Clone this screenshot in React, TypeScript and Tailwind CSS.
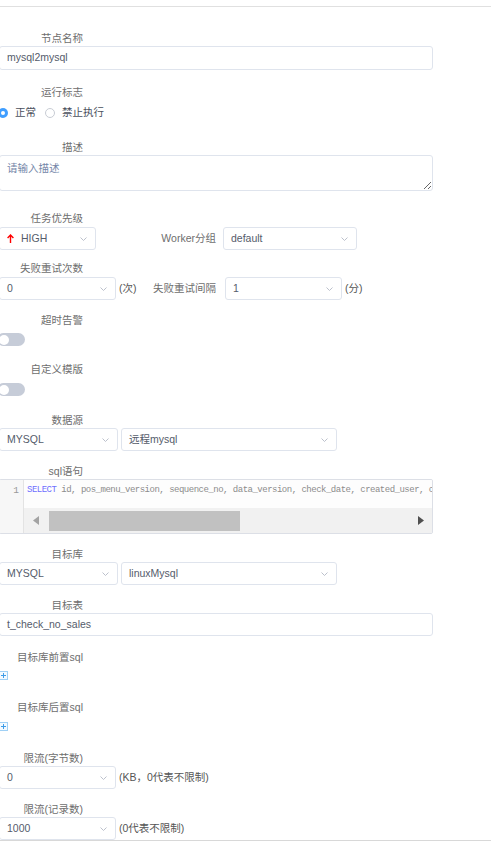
import React from "react"

const Chevron = () => (
  <svg width="7" height="4" viewBox="0 0 7 4" className="shrink-0">
    <path d="M0.5 0.5 L3.5 3.5 L6.5 0.5" fill="none" stroke="#b4bac6" strokeWidth="0.9" />
  </svg>
)

function Label({ children }: { children: React.ReactNode }) {
  return <div className="h-[16px] w-[83px] text-right leading-[16px] text-[#6e6e6e]">{children}</div>
}

function Select({ value, className }: { value: React.ReactNode; className: string }) {
  return (
    <div
      className={`flex h-[23px] shrink-0 items-center justify-between rounded-[3px] border border-[#dfe4ed] pl-[7px] pr-[8px] text-[#555c6b] ${className}`}
    >
      <span className="flex items-center">{value}</span>
      <Chevron />
    </div>
  )
}

const PlusBox = () => (
  <div className="-ml-px flex h-[9px] w-[9px] items-center justify-center border border-[#9fd0f5] bg-[#f3faff]">
    <svg width="7" height="7" viewBox="0 0 7 7">
      <path d="M3.5 1 V6 M1 3.5 H6" stroke="#3d9ce8" strokeWidth="1" />
    </svg>
  </div>
)

const Switch = () => (
  <div className="relative -ml-[3px] h-[13px] w-[28px] rounded-full bg-[#c6ccd8]">
    <div className="absolute left-[1.5px] top-[1.5px] h-[10px] w-[10px] rounded-full bg-white" />
  </div>
)

export default function App() {
  return (
    <div className="h-[845px] w-[491px] overflow-hidden bg-white font-['Liberation_Sans','Noto_Sans_CJK_SC',sans-serif] text-[10.5px]">
      <div className="mt-[6px] border-t border-[#e0e0e0]" />

      {/* 节点名称 */}
      <div className="mt-[23px]">
        <Label>节点名称</Label>
        <div className="-ml-px flex h-[24px] w-[434px] items-center rounded-[3px] border border-[#dfe4ed] pl-[7px] text-[#555c6b]">
          mysql2mysql
        </div>
      </div>

      {/* 运行标志 */}
      <div className="mt-[14px]">
        <Label>运行标志</Label>
        <div className="flex h-[26px] items-center text-[#4a4f5c]">
          <div className="-ml-[2px] flex h-[10px] w-[10px] items-center justify-center rounded-full bg-[#409eff]">
            <div className="h-[4px] w-[4px] rounded-full bg-white" />
          </div>
          <span className="ml-[7px]">正常</span>
          <div className="ml-[9px] h-[10px] w-[10px] rounded-full border border-[#c8ccd4]" />
          <span className="ml-[7px]">禁止执行</span>
        </div>
      </div>

      {/* 描述 */}
      <div className="mt-[13px]">
        <Label>描述</Label>
        <textarea
          readOnly
          placeholder="请输入描述"
          className="-ml-px block h-[36px] w-[434px] rounded-[3px] border border-[#dfe4ed] px-[7px] py-[4px] leading-[16px] text-[#555c6b] outline-none placeholder:text-[#7486a8]"
        />
      </div>

      {/* 任务优先级 */}
      <div className="mt-[19px]">
        <Label>任务优先级</Label>
        <div className="mt-px flex items-center">
          <Select
            className="-ml-px w-[97px]"
            value={
              <>
                <svg width="7" height="9" viewBox="0 0 7 9" className="mr-[7px]">
                  <path d="M3.5 9 V1.2 M0.6 4 L3.5 1 L6.4 4" fill="none" stroke="#f00" strokeWidth="1.4" />
                </svg>
                HIGH
              </>
            }
          />
          <div className="w-[120px] text-right text-[#6e6e6e]">Worker分组</div>
          <Select className="ml-[7px] w-[134px]" value="default" />
        </div>
      </div>

      {/* 失败重试次数 */}
      <div className="mt-[10px]">
        <Label>失败重试次数</Label>
        <div className="mt-px flex items-center">
          <Select className="-ml-px w-[117px]" value="0" />
          <span className="ml-[3px] w-[34px] text-[#555]">(次)</span>
          <span className="text-[#6e6e6e]">失败重试间隔</span>
          <Select className="ml-[9px] w-[117px]" value="1" />
          <span className="ml-[3px] text-[#555]">(分)</span>
        </div>
      </div>

      {/* 超时告警 */}
      <div className="mt-[12px]">
        <Label>超时告警</Label>
        <div className="mt-[5px]">
          <Switch />
        </div>
      </div>

      {/* 自定义模版 */}
      <div className="mt-[15px]">
        <Label>自定义模版</Label>
        <div className="mt-[6px]">
          <Switch />
        </div>
      </div>

      {/* 数据源 */}
      <div className="mt-[16px]">
        <Label>数据源</Label>
        <div className="flex items-center">
          <Select className="-ml-px w-[119px]" value="MYSQL" />
          <Select className="ml-[3px] w-[216px]" value="远程mysql" />
        </div>
      </div>

      {/* sql语句 */}
      <div className="mt-[12px]">
        <Label>sql语句</Label>
        <div className="-ml-px flex h-[55px] w-[434px] overflow-hidden rounded-[2px] border border-[#dcdfe6]">
          <div className="w-[24px] shrink-0 border-r border-[#e3e3e3] bg-[#f7f7f7] pr-[4px] pt-[4px] text-right font-['Liberation_Mono',monospace] text-[9.5px] leading-[13px] text-[#999]">
            1
          </div>
          <div className="flex min-w-0 flex-1 flex-col">
            <div className="h-[28px] overflow-hidden whitespace-nowrap bg-[#fdfdfd] pl-[3px] pt-[4px] font-['Liberation_Mono',monospace] text-[9px] leading-[13px] tracking-[-0.5px] text-[#8c8c8c]">
              <span className="text-[#6f6fff]">SELECT</span> id, pos_menu_version, sequence_no, data_version, check_date, created_user, c
            </div>
            <div className="flex flex-1 items-center bg-[#f1f1f1]">
              <svg width="6" height="9" viewBox="0 0 6 9" className="ml-[9px]">
                <path d="M6 0 L0 4.5 L6 9 Z" fill="#a3a3a3" />
              </svg>
              <div className="ml-[10px] h-[20px] w-[191px] bg-[#c1c1c1]" />
              <svg width="6" height="9" viewBox="0 0 6 9" className="ml-auto mr-[8px]">
                <path d="M0 0 L6 4.5 L0 9 Z" fill="#505050" />
              </svg>
            </div>
          </div>
        </div>
      </div>

      {/* 目标库 */}
      <div className="mt-[12px]">
        <Label>目标库</Label>
        <div className="flex items-center">
          <Select className="-ml-px w-[119px]" value="MYSQL" />
          <Select className="ml-[3px] w-[216px]" value="linuxMysql" />
        </div>
      </div>

      {/* 目标表 */}
      <div className="mt-[12px]">
        <Label>目标表</Label>
        <div className="-ml-px flex h-[23px] w-[434px] items-center rounded-[3px] border border-[#dfe4ed] pl-[7px] text-[#555c6b]">
          t_check_no_sales
        </div>
      </div>

      {/* 目标库前置sql */}
      <div className="mt-[13px]">
        <Label>目标库前置sql</Label>
        <div className="mt-[6px]">
          <PlusBox />
        </div>
      </div>

      {/* 目标库后置sql */}
      <div className="mt-[19px]">
        <Label>目标库后置sql</Label>
        <div className="mt-[7px]">
          <PlusBox />
        </div>
      </div>

      {/* 限流(字节数) */}
      <div className="mt-[19px]">
        <Label>限流(字节数)</Label>
        <div className="flex items-center">
          <Select className="-ml-px w-[117px]" value="0" />
          <span className="ml-[3px] text-[#555]">(KB，0代表不限制)</span>
        </div>
      </div>

      {/* 限流(记录数) */}
      <div className="mt-[12px]">
        <Label>限流(记录数)</Label>
        <div className="flex items-center">
          <Select className="-ml-px w-[117px]" value="1000" />
          <span className="ml-[3px] text-[#555]">(0代表不限制)</span>
        </div>
      </div>

      <div className="border-t border-[#d8d8d8]" />
    </div>
  )
}
